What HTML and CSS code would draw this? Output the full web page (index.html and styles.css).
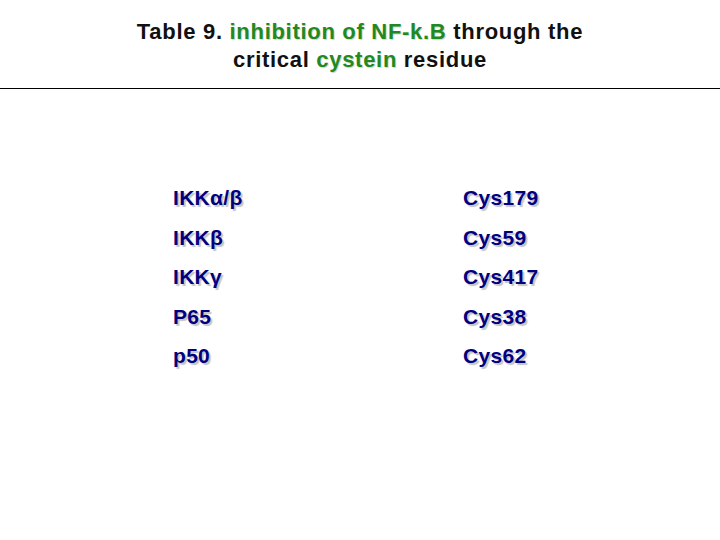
FILE: index.html
```html
<!DOCTYPE html>
<html>
<head>
<meta charset="utf-8">
<link rel="stylesheet" href="styles.css">
</head>
<body>
<div class="slide">
  <h1 class="title">Table 9. <span class="hl">inhibition of NF-k.B</span> through the<br>critical <span class="hl">cystein</span> residue</h1>
  <hr class="rule">
  <div class="table">
    <div class="cell">IKKα/β</div><div class="cell">Cys179</div>
    <div class="cell">IKKβ</div><div class="cell">Cys59</div>
    <div class="cell">IKKγ</div><div class="cell">Cys417</div>
    <div class="cell">P65</div><div class="cell">Cys38</div>
    <div class="cell">p50</div><div class="cell">Cys62</div>
  </div>
</div>
</body>
</html>
```
FILE: styles.css
```css
html, body {
  margin: 0;
  padding: 0;
  background: #fff;
}
.slide {
  width: 720px;
  height: 540px;
  overflow: hidden;
  font-family: "Liberation Sans", Arial, sans-serif;
}
.title {
  margin: 0;
  padding-top: 18px;
  text-align: center;
  font-size: 22px;
  font-weight: bold;
  letter-spacing: 0.7px;
  line-height: 28px;
  color: #111;
}
.hl {
  color: #1f8a1f;
  text-shadow: 1px 1px 1px #d0d0d0;
}
.rule {
  margin: 14px 0 0 0;
  border: 0;
  border-top: 1px solid #000;
  height: 0;
}
.table {
  display: grid;
  grid-template-columns: 290px auto;
  padding: 89px 0 0 173px;
}
.cell {
  font-size: 21px;
  font-weight: bold;
  letter-spacing: 0.3px;
  color: #000080;
  line-height: 39.5px;
  text-shadow: 2px 2px 1px #c4c4c4;
}
```
